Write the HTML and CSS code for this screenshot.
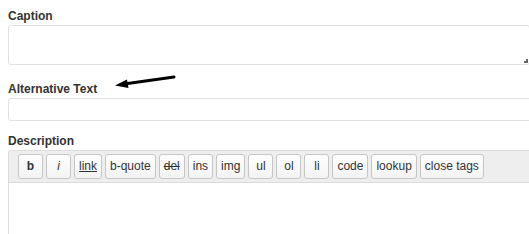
FILE: index.html
```html
<!DOCTYPE html>
<html>
<head>
<meta charset="utf-8">
<link rel="stylesheet" href="styles.css">
</head>
<body>
<div class="form">
  <div class="field caption">
    <label class="label">Caption</label>
    <div class="textarea"><span class="grip"></span></div>
  </div>
  <div class="field alt">
    <label class="label">Alternative Text</label>
    <div class="input"></div>
  </div>
  <div class="field desc">
    <label class="label">Description</label>
    <div class="editor">
      <div class="toolbar">
        <span class="btn b">b</span>
        <span class="btn i">i</span>
        <span class="btn u">link</span>
        <span class="btn">b-quote</span>
        <span class="btn s">del</span>
        <span class="btn">ins</span>
        <span class="btn">img</span>
        <span class="btn">ul</span>
        <span class="btn">ol</span>
        <span class="btn">li</span>
        <span class="btn">code</span>
        <span class="btn">lookup</span>
        <span class="btn">close tags</span>
      </div>
      <div class="edit-area"></div>
    </div>
  </div>
  <svg class="arrow" width="70" height="20" viewBox="0 0 70 20">
    <path d="M62 3 L12 10" stroke="#000" stroke-width="3" stroke-linecap="round" fill="none"/>
    <path d="M3 11.5 L15 5.5 L16.5 14 Z" fill="#000"/>
  </svg>
</div>
</body>
</html>
```
FILE: styles.css
```css
html, body {
  margin: 0;
  padding: 0;
  background: #fff;
  overflow: hidden;
}
body {
  width: 529px;
  height: 234px;
  font-family: "Liberation Sans", Arial, sans-serif;
  font-size: 12px;
  color: #333;
}
.form {
  position: relative;
  padding: 9px 0 0 8px;
}
.label {
  display: block;
  font-weight: bold;
  font-size: 12px;
  line-height: 15px;
  color: #333;
  margin-bottom: 1px;
}
.textarea {
  position: relative;
  box-sizing: border-box;
  width: 522px;
  height: 40px;
  border: 1px solid #dfdfdf;
  border-radius: 3px;
  background: #fff;
}
.grip {
  position: absolute;
  right: 1px;
  bottom: 1px;
  width: 4px;
  height: 4px;
  background:
    radial-gradient(circle, #666 0.8px, transparent 1px) 2px 0 / 2px 2px no-repeat,
    radial-gradient(circle, #666 0.8px, transparent 1px) 0 2px / 2px 2px no-repeat,
    radial-gradient(circle, #666 0.8px, transparent 1px) 2px 2px / 2px 2px no-repeat;
}
.alt {
  margin-top: 17px;
}
.input {
  box-sizing: border-box;
  width: 530px;
  height: 23px;
  border: 1px solid #dfdfdf;
  border-radius: 3px;
  background: #fff;
}
.desc {
  margin-top: 13px;
}
.editor {
  width: 530px;
  height: 84px;
  border: 1px solid #dcdcdc;
  border-right: none;
  border-bottom: none;
  border-radius: 3px 0 0 0;
  box-sizing: border-box;
}
.toolbar {
  display: flex;
  gap: 3px;
  padding: 3px 0 3px 9px;
  background: #eeeeee;
  border-bottom: 1px solid #dcdcdc;
  border-radius: 3px 0 0 0;
}
.btn {
  box-sizing: border-box;
  min-width: 25px;
  height: 25px;
  padding: 0 4px;
  border: 1px solid #c6c6c6;
  border-radius: 3px;
  background: linear-gradient(#fefefe, #f3f3f3);
  color: #333;
  font-size: 12px;
  line-height: 23px;
  text-align: center;
  white-space: nowrap;
}
.btn.b { font-weight: bold; }
.btn.i { font-style: italic; }
.btn.u { text-decoration: underline; }
.btn.s { text-decoration: line-through; }
.edit-area {
  height: 40px;
  background: #fff;
}
.arrow {
  position: absolute;
  left: 112px;
  top: 74px;
}
```
